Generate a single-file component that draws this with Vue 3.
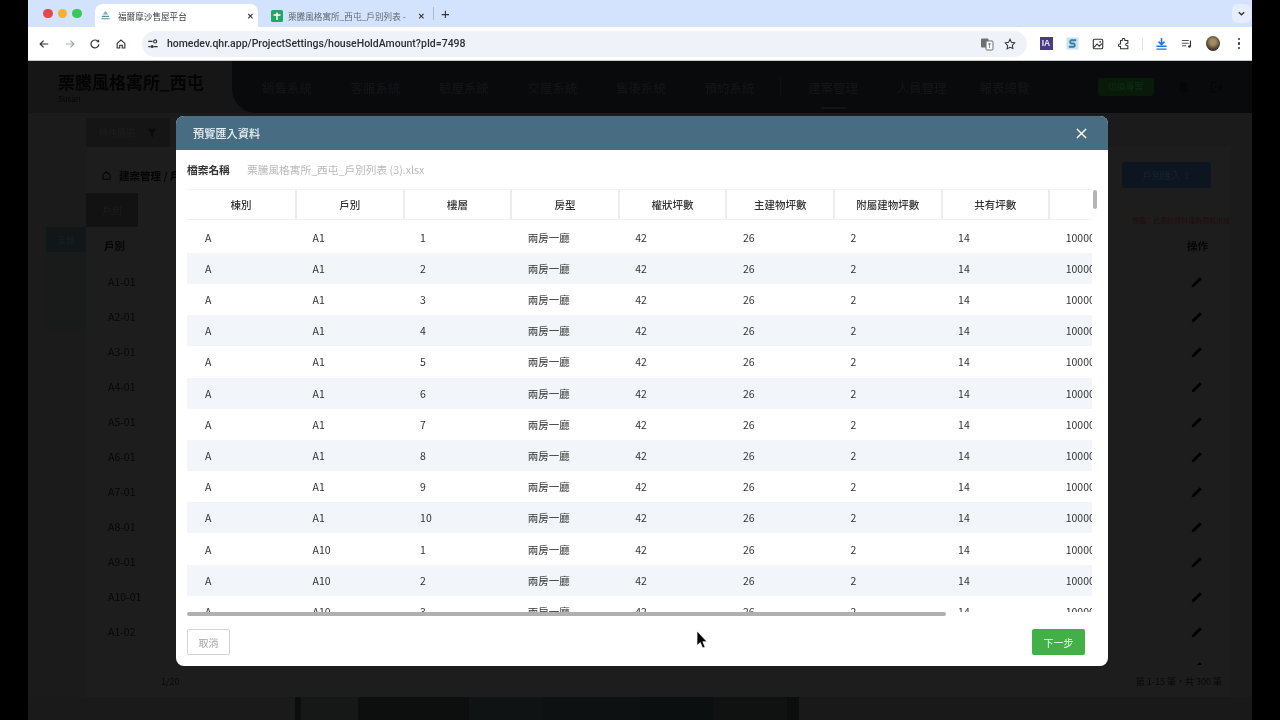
<template>
  <div class="screen">
    <div class="window">
      <div class="tabstrip">
        <div class="lights">
          <span class="light red"></span>
          <span class="light yellow"></span>
          <span class="light green"></span>
        </div>
        <div class="tab active">
          <svg class="favicon" viewBox="0 0 12 12" width="11" height="11">
            <path d="M6 1 9 5H3z" fill="#7fa9c4" />
            <path d="M2 7h8M1.5 9.5h9" stroke="#5b8aa8" stroke-width="1.2" fill="none" />
          </svg>
          <span class="tab-title">福爾摩沙售屋平台</span>
          <span class="tab-x">✕</span>
        </div>
        <div class="tab other">
          <svg class="favicon" viewBox="0 0 12 12" width="12" height="12">
            <rect width="12" height="12" rx="1.5" fill="#23a566" />
            <path d="M6 2.500V10M2.500 5h7" stroke="#fff" stroke-width="1.5" />
          </svg>
          <span class="tab-title">栗騰風格寓所_西屯_戶別列表 -</span>
          <span class="tab-x">✕</span>
        </div>
        <span class="tab-sep"></span>
        <span class="tab-plus">+</span>
        <span class="tab-menu">
          <svg viewBox="0 0 10 10" width="9" height="9">
            <path d="M2 3.5 5 6.5 8 3.5" fill="none" stroke="#333" stroke-width="1.5" />
          </svg>
        </span>
      </div>

      <div class="toolbar">
        <div class="nav-btns">
          <svg viewBox="0 0 14 14" width="12" height="12">
            <path d="M12 7H2.5M6.5 3 2.5 7l4 4" fill="none" stroke="#333" stroke-width="1.4" />
          </svg>
          <svg viewBox="0 0 14 14" width="12" height="12">
            <path d="M2 7h9.5M7.5 3l4 4-4 4" fill="none" stroke="#a3a7ab" stroke-width="1.4" />
          </svg>
          <svg viewBox="0 0 14 14" width="12" height="12">
            <path d="M11.5 7.5A4.6 4.6 0 1 1 10.2 3.7" fill="none" stroke="#333" stroke-width="1.4" />
            <path d="M11.8 1.500v3.400H8.400z" fill="#333" />
          </svg>
          <svg viewBox="0 0 14 14" width="12" height="12">
            <path d="M2.5 6.3 7 2.300l4.500 4v5.400H8.500V8.500h-3v3.200h-3z" fill="none" stroke="#333" stroke-width="1.3" />
          </svg>
        </div>
        <div class="omnibox">
          <svg class="tune" viewBox="0 0 14 14" width="12" height="12">
            <path d="M1.500 4h5M1.500 10h2.500M8 10h4.500" stroke="#333" stroke-width="1.3" />
            <circle cx="9.5" cy="4" r="1.8" fill="none" stroke="#333" stroke-width="1.3" />
            <circle cx="6" cy="10" r="1.8" fill="#333" />
          </svg>
          <span class="url">homedev.qhr.app/ProjectSettings/houseHoldAmount?pId=7498</span>
          <span class="omni-right">
            <svg viewBox="0 0 14 14" width="14" height="14">
              <rect x="1" y="1.5" width="7.5" height="9" rx="1" fill="#6b7075" />
              <rect x="6" y="4" width="7" height="9" rx="1" fill="#fff" stroke="#6b7075" />
              <path d="M8 7h3M9.5 6v5" stroke="#6b7075" stroke-width=".8" />
            </svg>
            <svg viewBox="0 0 14 14" width="12" height="12">
              <path d="m7 1.500 1.700 3.600 3.800.5-2.800 2.700.7 3.900L7 10.800l-3.400 1.900.7-3.900L1.500 5.600l3.800-.5z" fill="none" stroke="#333" stroke-width="1.2" />
            </svg>
          </span>
        </div>
        <div class="ext-icons">
          <span class="ext"><span class="ext-ia">IA</span></span>
          <span class="ext">
            <svg viewBox="0 0 14 14" width="13" height="13">
              <rect x=".5" y=".5" width="13" height="13" fill="#cfe3ee" />
              <path d="M11 3.500H5.500a2 2 0 0 0 0 3.500h3a2 2 0 0 1 0 3.500H3" fill="none" stroke="#2f7fa8" stroke-width="2" />
            </svg>
          </span>
          <span class="ext">
            <svg viewBox="0 0 14 14" width="12" height="12">
              <rect x="1.5" y="1.5" width="11" height="11" rx="1.5" fill="none" stroke="#333" stroke-width="1.3" />
              <path d="m2.500 11 3.500-4 2.500 2.500 3-3" fill="none" stroke="#333" stroke-width="1.3" />
              <circle cx="9.5" cy="4.5" r="1" fill="#333" />
            </svg>
          </span>
          <span class="ext">
            <svg viewBox="0 0 14 14" width="12" height="12">
              <path d="M5 3V2a1.500 1.500 0 0 1 3 0v1h3.500v3h-1a1.500 1.500 0 0 0 0 3h1v3.500H3V10H2a1.500 1.500 0 0 1 0-3h1V3z" fill="none" stroke="#333" stroke-width="1.2" />
            </svg>
          </span>
          <span class="ext-sep"></span>
          <span class="ext">
            <svg viewBox="0 0 14 14" width="13" height="13">
              <path d="M7 1v6.500M3.800 5 7 8.300 10.200 5" fill="none" stroke="#1a73e8" stroke-width="1.7" />
              <path d="M1.500 10h11M1.500 13h11" stroke="#1a73e8" stroke-width="1.5" />
            </svg>
          </span>
          <span class="ext">
            <svg viewBox="0 0 14 14" width="12" height="12">
              <path d="M1 3h8M1 6h8M1 9h5" stroke="#555" stroke-width="1.2" />
              <path d="M11 3v7" stroke="#333" stroke-width="1.3" />
              <circle cx="9.8" cy="10" r="1.5" fill="#333" />
            </svg>
          </span>
          <span class="ext"><span class="avatar"></span></span>
          <span class="ext"><span class="dots"><i></i><i></i><i></i></span></span>
        </div>
      </div>

      <div class="page">
        <header class="site-head">
          <div class="brand">
            <div class="brand-name">栗騰風格寓所_西屯</div>
            <div class="brand-user">Susan</div>
          </div>
          <nav class="site-nav">
            <span v-for="item in navLeft" :key="item" class="nav-item">{{ item }}</span>
            <span class="nav-div"></span>
            <div class="nav-group">
              <span v-for="item in navRight" :key="item" class="nav-item" :class="{ current: item === '建案管理' }">{{ item }}</span>
            </div>
            <span class="nav-green">切換專案</span>
            <svg class="nav-bell" viewBox="0 0 14 14" width="13" height="13">
              <path d="M7 1a4 4 0 0 0-4 4v4L1.500 11h11L11 9V5a4 4 0 0 0-4-4zM5.500 12a1.500 1.500 0 0 0 3 0z" fill="#050505" />
            </svg>
            <svg viewBox="0 0 14 14" width="14" height="14">
              <path d="M8 2H2.500v10H8M6 7h7M10.500 4.500 13 7l-2.500 2.500" fill="none" stroke="#050505" stroke-width="1.2" />
            </svg>
          </nav>
        </header>

        <main class="site-main">
          <aside class="side">
            <div class="side-tab">全部</div>
            <div class="side-rest"></div>
          </aside>
          <div class="content">
            <div class="filter-btn">
              <span>條件篩選</span>
              <svg viewBox="0 0 12 12" width="10" height="10"><path d="M1 1h10L7 6v5L5 10V6z" fill="#0a0a0a" /></svg>
            </div>
            <section class="card">
              <div class="card-top">
                <span class="crumb">
                  <svg viewBox="0 0 14 14" width="11" height="11">
                    <path d="M2.500 6.300 7 2.300l4.500 4v5.400h-9z" fill="none" stroke="#050505" stroke-width="1.4" />
                  </svg>
                  建案管理 / 戶別管理
                </span>
                <span class="import-btn">戶別匯入 ⇪</span>
              </div>
              <div class="card-tabs">
                <span class="card-tab on">戶別</span>
                <span class="card-tab">權狀坪數</span>
                <span class="card-note">提醒：此表的資料僅為預覽用途</span>
              </div>
              <div class="bg-head">
                <span>戶別</span>
                <span>操作</span>
              </div>
              <div class="bg-rows">
                <div v-for="(unit, i) in bgUnits" :key="i" class="bg-row">
                  <span>{{ unit }}</span>
                  <svg viewBox="0 0 14 14" width="14" height="14">
                    <path d="M1.500 12.500 2.500 9.500 9.800 2.200 11.800 4.200 4.500 11.500z" fill="#000" />
                  </svg>
                </div>
              </div>
              <div class="card-foot">
                <span>1/20</span>
                <span>第 1-15 筆，共 300 筆</span>
              </div>
            </section>
          </div>
        </main>
        <div class="bg-photo"></div>

        <div class="modal-layer">
          <div class="modal">
            <div class="modal-head">
              <span>預覽匯入資料</span>
              <svg viewBox="0 0 12 12" width="11" height="11">
                <path d="M1 1 11 11M11 1 1 11" stroke="#fff" stroke-width="1.6" />
              </svg>
            </div>
            <div class="modal-body">
              <div class="file-row">
                <span class="file-label">檔案名稱</span>
                <span class="file-name">栗騰風格寓所_西屯_戶別列表 (3).xlsx</span>
              </div>
              <div class="sheet">
                <div class="sheet-clip">
                  <div class="grid-row grid-head">
                    <div v-for="col in columns" :key="col" class="th">{{ col }}</div>
                  </div>
                  <div v-for="(row, i) in rows" :key="i" class="grid-row" :class="{ striped: i % 2 === 1 }">
                    <div v-for="(val, j) in row" :key="j" class="td">{{ val }}</div>
                  </div>
                </div>
                <span class="vbar"></span>
                <span class="hbar"></span>
              </div>
              <div class="modal-foot">
                <button class="btn-cancel">取消</button>
                <button class="btn-next">下一步</button>
              </div>
            </div>
          </div>
        </div>

        <svg class="cursor" viewBox="0 0 12 20" width="12" height="20">
          <path d="M1 1v14.500l3.300-3 2.300 5.500 2.500-1-2.300-5.300H11z" fill="#000" stroke="#fff" stroke-width=".7" />
        </svg>
      </div>
    </div>
  </div>
</template>

<script setup>
const navLeft = ['銷售系統', '客服系統', '驗屋系統', '交屋系統', '售後系統', '預約系統']
const navRight = ['建案管理', '人員管理', '報表總覽']

const bgUnits = ['A1-01', 'A2-01', 'A3-01', 'A4-01', 'A5-01', 'A6-01', 'A7-01', 'A8-01', 'A9-01', 'A10-01', 'A1-02', '']

const columns = ['棟別', '戶別', '樓層', '房型', '權狀坪數', '主建物坪數', '附屬建物坪數', '共有坪數', '']

const makeRow = (unit, floor) => ['A', unit, floor, '兩房一廳', 42, 26, 2, 14, 1000000]

const rows = [
  ...Array.from({ length: 10 }, (_, i) => makeRow('A1', i + 1)),
  ...[1, 2, 3].map((floor) => makeRow('A10', floor))
]
</script>

<style>
html,
body {
  margin: 0;
  background: #000;
}
</style>

<style scoped>
.screen {
  width: 1280px;
  height: 720px;
  padding: 0 28px;
  box-sizing: border-box;
  background: #000;
  overflow: hidden;
  font-family: "Noto Sans CJK TC", "Noto Sans", sans-serif;
  filter: blur(0.4px);
}

.window {
  height: 720px;
  display: flex;
  flex-direction: column;
}

/* browser chrome */
.tabstrip {
  height: 27px;
  flex: none;
  display: flex;
  align-items: flex-end;
  background: #d3e3fd;
  position: relative;
}

.lights {
  display: flex;
  gap: 5px;
  align-items: center;
  width: 67px;
  height: 27px;
  padding-left: 15px;
  box-sizing: border-box;
}

.light {
  width: 9.5px;
  height: 9.5px;
  border-radius: 50%;
}

.red { background: #e5484f; }
.yellow { background: #f2b134; }
.green { background: #37c85a; }

.tab {
  height: 23px;
  display: flex;
  align-items: center;
  box-sizing: border-box;
  font-size: 8.6px;
  color: #3c4043;
}

.tab.active {
  width: 163px;
  padding: 0 4px 0 5px;
  background: #fff;
  border-radius: 8px 8px 0 0;
}

.tab.active .tab-title {
  margin-left: 7px;
}

.tab.other {
  width: 175px;
  padding: 0 8px 0 13px;
}

.tab.other .tab-title {
  margin-left: 5px;
  color: #5f6671;
}

.tab-title {
  flex: 1;
  min-width: 0;
  white-space: nowrap;
}

.tab-x {
  font-size: 8px;
  color: #333;
  font-weight: 700;
}

.tab-sep {
  width: 1px;
  height: 13px;
  background: #aab8cc;
  align-self: center;
}

.tab-plus {
  align-self: center;
  margin-left: 7px;
  font-size: 15px;
  line-height: 1;
  color: #333;
  font-family: "Liberation Sans", sans-serif;
}

.tab-menu {
  position: absolute;
  right: 1px;
  top: 4px;
  width: 19px;
  height: 19px;
  background: #e6eefb;
  border-radius: 6px;
  display: flex;
  align-items: center;
  justify-content: center;
}

.toolbar {
  height: 34px;
  flex: none;
  display: flex;
  align-items: center;
  background: #fff;
  border-bottom: 1px solid #c8c8c8;
  box-sizing: border-box;
}

.nav-btns {
  display: flex;
  align-items: center;
  gap: 13.5px;
  width: 114px;
  padding-left: 10px;
  box-sizing: border-box;
}

.omnibox {
  width: 886px;
  height: 26px;
  border-radius: 13px;
  background: #eff3f9;
  display: flex;
  align-items: center;
  padding: 0 11px 0 5px;
  box-sizing: border-box;
}

.tune {
  margin-right: 8px;
}

.url {
  font-family: Roboto, "Liberation Sans", sans-serif;
  font-size: 10.5px;
  font-weight: 500;
  color: #2b2f33;
  flex: 1;
  white-space: nowrap;
}

.omni-right {
  display: flex;
  align-items: center;
  gap: 10px;
}

.ext-icons {
  flex: 1;
  display: flex;
  align-items: center;
  padding-left: 6px;
}

.ext {
  width: 26px;
  flex: none;
  display: flex;
  align-items: center;
  justify-content: center;
}

.ext-ia {
  width: 13px;
  height: 13px;
  background: #4b3a86;
  color: #e8e4f5;
  font: 700 8.5px/13px "Liberation Sans", sans-serif;
  text-align: center;
}

.ext-sep {
  width: 1px;
  height: 12px;
  background: #dde3ea;
  margin: 0 5px;
}

.avatar {
  width: 14px;
  height: 15px;
  border-radius: 50%;
  background: radial-gradient(circle at 50% 40%, #a08a60 0 25%, #3b3228 70%);
}

.dots {
  display: flex;
  flex-direction: column;
  gap: 2px;
}

.dots i {
  width: 2.5px;
  height: 2.5px;
  border-radius: 50%;
  background: #333;
}

/* dimmed page behind the modal */
.page {
  flex: 1;
  min-height: 0;
  position: relative;
  background: #1b1b1b;
  display: flex;
  flex-direction: column;
  overflow: hidden;
}

.site-head {
  height: 52px;
  flex: none;
  display: flex;
  background: #161616;
}

.brand {
  width: 204px;
  padding: 10px 0 0 30px;
  box-sizing: border-box;
}

.brand-name {
  font-size: 17px;
  line-height: 22px;
  font-weight: 700;
  color: #040404;
  white-space: nowrap;
}

.brand-user {
  font-size: 8px;
  color: #060606;
  line-height: 12px;
}

.site-nav {
  flex: 1;
  display: flex;
  align-items: center;
  background: #080a0c;
  border-radius: 0 0 0 24px;
  padding-left: 30px;
  font-size: 12.5px;
  font-weight: 500;
  color: #121518;
}

.nav-item {
  width: 88.5px;
  flex: none;
  position: relative;
  white-space: nowrap;
}

.nav-group {
  display: flex;
}

.nav-group .nav-item:nth-child(2) {
  width: 83px;
}

.nav-item.current::after {
  content: "";
  position: absolute;
  left: 13px;
  bottom: -12px;
  width: 25px;
  height: 2px;
  background: #121518;
}

.nav-div {
  width: 1px;
  height: 20px;
  background: #0e1113;
  margin: 0 27px 0 -13px;
}

.nav-green {
  width: 56px;
  height: 18px;
  margin-left: 29.5px;
  background: #091a0b;
  border-radius: 3px;
  color: #0f2a12;
  font-size: 9px;
  line-height: 18px;
  text-align: center;
}

.nav-bell {
  margin: 0 18.5px 0 23.5px;
}

.site-main {
  height: 584px;
  flex: none;
  display: flex;
  padding: 5px 22px 0 18px;
  box-sizing: border-box;
}

.side {
  width: 40px;
  padding-top: 109px;
  flex: none;
}

.side-tab {
  height: 25px;
  background: #111618;
  color: #1b2226;
  font-size: 8px;
  line-height: 25px;
  text-align: center;
}

.side-rest {
  height: 78px;
  background: #191a1a;
}

.content {
  flex: 1;
  min-width: 0;
}

.filter-btn {
  width: 84px;
  height: 29px;
  background: #151515;
  display: flex;
  align-items: center;
  justify-content: center;
  gap: 12px;
  font-size: 9px;
  color: #1e1e1e;
}

.card {
  height: 550px;
  background: #1d1d1d;
  display: flex;
  flex-direction: column;
  overflow: hidden;
}

.card-top {
  height: 46px;
  padding: 10px 19px 0 15px;
  box-sizing: border-box;
  display: flex;
  align-items: center;
  justify-content: space-between;
  font-size: 10.5px;
  font-weight: 700;
  color: #050505;
}

.crumb {
  display: flex;
  align-items: center;
  gap: 7px;
  white-space: nowrap;
}

.import-btn {
  width: 89px;
  height: 26px;
  background: #0d1520;
  border-radius: 3px;
  color: #182433;
  font-size: 9.5px;
  font-weight: 400;
  line-height: 26px;
  text-align: center;
}

.card-tabs {
  height: 34px;
  flex: none;
  display: flex;
  align-items: center;
  font-size: 9.5px;
  color: #1e1e1e;
}

.card-tab {
  width: 52px;
  height: 34px;
  line-height: 34px;
  text-align: center;
}

.card-tab.on {
  background: #121212;
}

.card-note {
  margin-left: auto;
  padding-top: 20px;
  font-size: 7px;
  color: #240d0d;
  white-space: nowrap;
}

.bg-head {
  height: 37px;
  flex: none;
  display: flex;
  align-items: center;
  justify-content: space-between;
  padding: 0 22px 0 18px;
  font-size: 10.5px;
  font-weight: 700;
  color: #060606;
}

.bg-rows {
  flex: 1;
  min-height: 0;
  overflow: hidden;
}

.bg-row {
  height: 35px;
  display: flex;
  align-items: center;
  justify-content: space-between;
  padding: 0 26px 0 22px;
  font-size: 10.5px;
  color: #070707;
}

.card-foot {
  height: 32px;
  flex: none;
  display: flex;
  align-items: center;
  justify-content: space-between;
  padding: 0 8px 0 75px;
  font-size: 9px;
  color: #090909;
}

.bg-photo {
  flex: 1;
  background: linear-gradient(90deg,
    #1a1a1a 0 21.8%, #0c0e0e 21.8% 22.3%, #161717 22.3% 27%, #0d0f0f 27% 36%, #101313 36% 42%, #0e1111 42% 50%, #0c0f0f 50% 56%, #101212 56% 62%, #0c0e0e 62% 63%,
    #191919 63% 100%);
}

/* modal */
.modal-layer {
  position: absolute;
  inset: 0;
}

.modal {
  width: 932px;
  height: 550px;
  margin: 55px 0 0 148px;
  background: #fff;
  border-radius: 8px;
  overflow: hidden;
  display: flex;
  flex-direction: column;
}

.modal-head {
  height: 34px;
  flex: none;
  background: #486d83;
  color: #eaf1f5;
  display: flex;
  align-items: center;
  justify-content: space-between;
  padding: 0 21px 0 17px;
  font-size: 11.2px;
  font-weight: 500;
}

.modal-body {
  flex: 1;
  min-height: 0;
  padding-left: 11px;
  display: flex;
  flex-direction: column;
}

.file-row {
  height: 39px;
  flex: none;
  display: flex;
  align-items: center;
  font-size: 10.7px;
}

.file-label {
  font-weight: 700;
  color: #333;
  width: 60px;
}

.file-name {
  color: #b9b9b9;
}

.sheet {
  position: relative;
  width: 910px;
  height: 427px;
  flex: none;
}

.sheet-clip {
  width: 905px;
  height: 423px;
  overflow: hidden;
}

.grid-row {
  display: grid;
  grid-template-columns: 110px repeat(8, 107.6px);
  width: max-content;
  height: 31.2px;
  font-size: 10.5px;
  color: #333;
}

.grid-head {
  box-sizing: border-box;
  margin-bottom: 1.4px;
  border-top: 1px solid #f3f3f3;
  border-bottom: 1px solid #f0f0f0;
  font-weight: 500;
}

.th {
  display: flex;
  align-items: center;
  justify-content: center;
  border-right: 2px solid #ececec;
  box-sizing: border-box;
}

.th:last-child {
  border-right: 0;
}

.td {
  display: flex;
  align-items: center;
  padding-left: 15.5px;
}

.td:first-child {
  padding-left: 18px;
}

.striped {
  background: #f2f6fa;
}

.vbar {
  position: absolute;
  left: 906px;
  top: 1px;
  width: 4px;
  height: 19px;
  border-radius: 2px;
  background: #b4b4b4;
}

.hbar {
  position: absolute;
  left: 0;
  top: 423px;
  width: 759px;
  height: 4px;
  border-radius: 2px;
  background: #b0b0b0;
}

.modal-foot {
  flex: 1;
  display: flex;
  align-items: flex-start;
  justify-content: space-between;
  padding: 13px 23px 0 0;
}

.modal-foot button {
  height: 26px;
  border-radius: 2px;
  font: 10px "Noto Sans CJK TC", sans-serif;
  padding: 0;
}

.btn-cancel {
  width: 43px;
  background: #fff;
  border: 1.5px solid #d4d4d4;
  color: #a6a6a6;
}

.btn-next {
  width: 53px;
  background: #43b047;
  border: 0;
  color: #f2fbf2;
}

.cursor {
  position: absolute;
  left: 668px;
  top: 569px;
}
</style>
